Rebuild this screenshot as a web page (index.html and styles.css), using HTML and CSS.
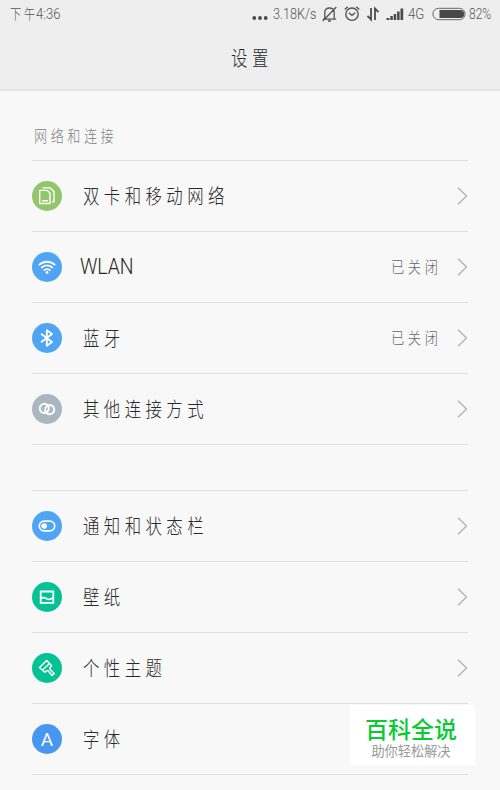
FILE: index.html
```html
<!DOCTYPE html>
<html lang="zh-CN">
<head>
    <meta charset="UTF-8">
    <meta name="viewport" content="width=device-width, initial-scale=1.0">
    <title>设置</title>
    <link rel="stylesheet" href="styles.css">
</head>
<body>
    <header>
        <div class="status-bar">
            <div class="time"><span class="cn">下午</span><span class="clock">4:36</span></div>
            <div class="status-icons">
                <svg class="dots" width="16" height="18" viewBox="0 0 16 18" fill="#4a4a4a"><circle cx="2.3" cy="13" r="1.9"/><circle cx="8" cy="13" r="1.9"/><circle cx="13.7" cy="13" r="1.9"/></svg>
                <span class="speed">3.18K/s</span>
                <svg class="bell" width="15" height="18" viewBox="0 0 15 18" fill="none" stroke="#555" stroke-width="1.3"><path d="M.8 14.2h13.4M2.8 14V7.2C2.8 4.5 4.800 3 7.5 3s4.700 1.500 4.700 4.200V14M6 16h3M14.300 2 .8 16"/></svg>
                <svg class="alarm" width="16" height="18" viewBox="0 0 16 18" fill="none" stroke="#555" stroke-width="1.4"><circle cx="8" cy="9.200" r="6.200"/><path d="M4.800 7.800l3.200 2.600 3.200-2.600M.7 4.500 3.800 1.800M15.300 4.500 12.200 1.800"/></svg>
                <svg class="data" width="14" height="18" viewBox="0 0 14 18" fill="none" stroke="#4a4a4a" stroke-width="1.8"><path d="M5 3v11.500L1.500 10.800M9 15V3.500l3.500 3.700"/></svg>
                <svg class="signal" width="18" height="18" viewBox="0 0 18 18" fill="#4a4a4a"><path d="M.5 13h2.800v2H.5zM4.300 11h2.500v4H4.300zM7.700 9h2.500v6H7.700zM11.100 6.500h2.500V15h-2.500zM14.500 3.500h2.700V15h-2.700z"/></svg>
                <span class="net">4G</span>
                <svg class="battery" width="34" height="18" viewBox="0 0 34 18"><rect x=".9" y="3.300" width="32.200" height="11.400" rx="5.700" fill="none" stroke="#666"/><path d="M7.500 5h20.700a4 4 0 0 1 0 8H7.500z" fill="#484848"/></svg>
                <span class="percent">82%</span>
            </div>
        </div>
        <h1><span>设置</span></h1>
    </header>
    <main>
        <section>
            <h2><span>网络和连接</span></h2>
            <div class="row">
                <svg class="icon" viewBox="0 0 30 30"><circle cx="15" cy="15" r="15" fill="#91c66a"/><g fill="none" stroke="#fff" stroke-width="1.400" stroke-linejoin="round"><path d="M7.700 9.400h7.600l2.700 2.700v10.400H7.700zM10 19.700h6"/><path d="M10.500 6.900h7.800l3.700 3.700v10.200h-2"/></g></svg>
                <span class="label">双卡和移动网络</span>
                <svg class="arrow" viewBox="0 0 11 18"><path d="M1 .8 9.500 9 1 17.200"/></svg>
            </div>
            <div class="row">
                <svg class="icon" viewBox="0 0 30 30"><circle cx="15" cy="15" r="15" fill="#50a5f3"/><g fill="none" stroke="#fff" stroke-width="1.800"><path d="M6.800 13.200c4.900-4.600 11.500-4.600 16.400 0M9.200 15.900c3.500-3.200 8.100-3.200 11.600 0M11.600 18.500c2.200-1.800 4.600-1.800 6.800 0"/></g><circle cx="15" cy="20.400" r="1.400" fill="#fff"/></svg>
                <span class="label latin">WLAN</span>
                <span class="value">已关闭</span>
                <svg class="arrow" viewBox="0 0 11 18"><path d="M1 .8 9.500 9 1 17.200"/></svg>
            </div>
            <div class="row">
                <svg class="icon" viewBox="0 0 30 30"><circle cx="15" cy="15" r="15" fill="#50a5f3"/><path d="M9 10.700l11 8.400-5.200 3.700V7.200l5.200 3.700L9 19.300" fill="none" stroke="#fff" stroke-width="1.900" stroke-linejoin="round"/></svg>
                <span class="label">蓝牙</span>
                <span class="value">已关闭</span>
                <svg class="arrow" viewBox="0 0 11 18"><path d="M1 .8 9.500 9 1 17.200"/></svg>
            </div>
            <div class="row">
                <svg class="icon" viewBox="0 0 30 30"><circle cx="15" cy="15" r="15" fill="#a9b7c1"/><g fill="none" stroke="#fff" stroke-width="1.900" stroke-linecap="round"><path d="M13.600 18.800a4.600 4.600 0 1 1 3.300-4.800c0 1.600-.8 3-1.900 4"/><path d="M16.400 11.200a4.600 4.600 0 1 1-3.300 4.800c0-1.600.8-3 1.900-4"/></g></svg>
                <span class="label">其他连接方式</span>
                <svg class="arrow" viewBox="0 0 11 18"><path d="M1 .8 9.500 9 1 17.200"/></svg>
            </div>
        </section>
        <section class="personal">
            <div class="row">
                <svg class="icon" viewBox="0 0 30 30"><circle cx="15" cy="15" r="15" fill="#50a5f3"/><rect x="7.300" y="10.200" width="15.400" height="9.600" rx="4.800" fill="none" stroke="#fff" stroke-width="1.700"/><circle cx="12.200" cy="15" r="2.800" fill="#fff"/></svg>
                <span class="label">通知和状态栏</span>
                <svg class="arrow" viewBox="0 0 11 18"><path d="M1 .8 9.500 9 1 17.200"/></svg>
            </div>
            <div class="row">
                <svg class="icon" viewBox="0 0 30 30"><circle cx="15" cy="15" r="15" fill="#05c295"/><path d="M8.700 9.500h12.600v11.400H8.700zM9 16.500c2.500-1.700 4-.9 5.700.2 2.200 1.200 4.200.8 6.300-.9" fill="none" stroke="#fff" stroke-width="1.800"/></svg>
                <span class="label">壁纸</span>
                <svg class="arrow" viewBox="0 0 11 18"><path d="M1 .8 9.500 9 1 17.200"/></svg>
            </div>
            <div class="row">
                <svg class="icon" viewBox="0 0 30 30"><circle cx="15" cy="15" r="15" fill="#05c295"/><path d="M14.700 7.500L7.500 14.500l5.300 4.800 1.700-1.500h1.600l4 4.600 2-1.900-4.300-4.500.1-1.300 1.800-1.900zM17.500 10.500l-7.200 6.700" fill="none" stroke="#fff" stroke-width="1.500" stroke-linejoin="round"/></svg>
                <span class="label">个性主题</span>
                <svg class="arrow" viewBox="0 0 11 18"><path d="M1 .8 9.500 9 1 17.200"/></svg>
            </div>
            <div class="row">
                <span class="icon letter">A</span>
                <span class="label">字体</span>
            </div>
        </section>
    </main>
    <div class="watermark">
        <div class="brand">百科全说</div>
        <div class="slogan">助你轻松解决</div>
    </div>
</body>
</html>
```
FILE: styles.css
```css
* {
    box-sizing: border-box;
}
body {
    margin: 0;
    height: 790px;
    overflow: hidden;
    position: relative;
    background-color: #f8f8f8;
    color: #282828;
    font-family: Roboto, "Noto Sans CJK SC", sans-serif;
    font-weight: 300;
}
header {
    height: 91px;
    background-color: #eeeeee;
    border-bottom: 2px solid #e4e4e4;
}
.status-bar {
    display: flex;
    justify-content: space-between;
    height: 28px;
    padding: 0 7px 0 10px;
    color: #555;
    font-size: 14px;
    line-height: 28px;
}
.time {
    display: flex;
}
.cn {
    width: 26px;
    font-family: "Noto Sans CJK SC", sans-serif;
    font-size: 14px;
    line-height: 26px;
    letter-spacing: 3.5px;
    white-space: nowrap;
    transform: scaleX(0.8);
    transform-origin: left;
}
.clock {
    width: 26px;
    transform: scaleX(0.93);
    transform-origin: left;
}
.status-icons {
    display: flex;
    align-items: center;
}
.speed {
    width: 43px;
    margin-left: 5px;
    white-space: nowrap;
    transform: scaleX(0.9);
    transform-origin: left;
}
.bell {
    margin-left: 6px;
}
.alarm {
    margin-left: 7px;
}
.data {
    margin-left: 6px;
}
.signal {
    margin-left: 6px;
}
.net {
    width: 18px;
    margin-left: 4px;
    transform: scaleX(0.94);
    transform-origin: left;
}
.battery {
    margin-left: 6px;
}
.percent {
    width: 24px;
    margin-left: 3px;
    transform: scaleX(0.86);
    transform-origin: left;
}
h1 {
    margin: 0;
    padding-left: 231px;
    font-size: 20px;
    font-weight: 300;
    line-height: 60px;
    letter-spacing: 5.6px;
}
h1 span,
h2 span {
    display: inline-block;
    font-family: "Noto Sans CJK SC", sans-serif;
    transform: scaleX(0.82);
    transform-origin: left;
}
main {
    padding: 0 32px;
}
h2 {
    height: 70px;
    margin: 0;
    padding: 32px 0 0 2px;
    border-bottom: 1px solid #e0e0e0;
    color: #808080;
    font-size: 16px;
    font-weight: 300;
    line-height: 24px;
    letter-spacing: 4.3px;
}
.row {
    display: flex;
    align-items: center;
    height: 71px;
    border-bottom: 1px solid #e0e0e0;
}
.personal {
    margin-top: 45px;
    border-top: 1px solid #e0e0e0;
}
.icon {
    flex: none;
    width: 30px;
    height: 30px;
}
.letter {
    border-radius: 50%;
    background-color: #4797f1;
    color: #fff;
    font-size: 19px;
    font-weight: 400;
    line-height: 31px;
    text-align: center;
}
.label {
    margin-left: 20.5px;
    padding-bottom: 1px;
    font-family: "Noto Sans CJK SC", sans-serif;
    font-size: 20px;
    line-height: 30px;
    letter-spacing: 5.4px;
    white-space: nowrap;
    transform: scaleX(0.82);
    transform-origin: left;
}
.latin {
    margin-left: 18px;
    padding-bottom: 0;
    font-family: Roboto, sans-serif;
    font-size: 21.5px;
    letter-spacing: 0;
    transform: scaleX(0.9);
}
.value {
    width: 49px;
    margin: 0 17px 0 auto;
    padding-bottom: 2px;
    color: #666;
    font-family: "Noto Sans CJK SC", sans-serif;
    font-size: 16px;
    letter-spacing: 4.3px;
    white-space: nowrap;
    transform: scaleX(0.83);
    transform-origin: left;
}
.arrow {
    flex: none;
    width: 11px;
    height: 18px;
    margin-left: auto;
    fill: none;
    stroke: #b0b0b0;
    stroke-width: 1.3;
}
.value + .arrow {
    margin-left: 0;
}
.watermark {
    position: absolute;
    left: 350px;
    top: 705px;
    width: 125px;
    height: 60px;
    padding: 9px 3px 0 0;
    background-color: #fff;
    font-family: "Noto Sans CJK SC", sans-serif;
    text-align: center;
    white-space: nowrap;
}
.brand {
    color: #06cc32;
    font-size: 23px;
    font-weight: 500;
    line-height: 29px;
}
.slogan {
    color: #999;
    font-size: 13.2px;
    font-weight: 400;
    line-height: 16px;
}
```
